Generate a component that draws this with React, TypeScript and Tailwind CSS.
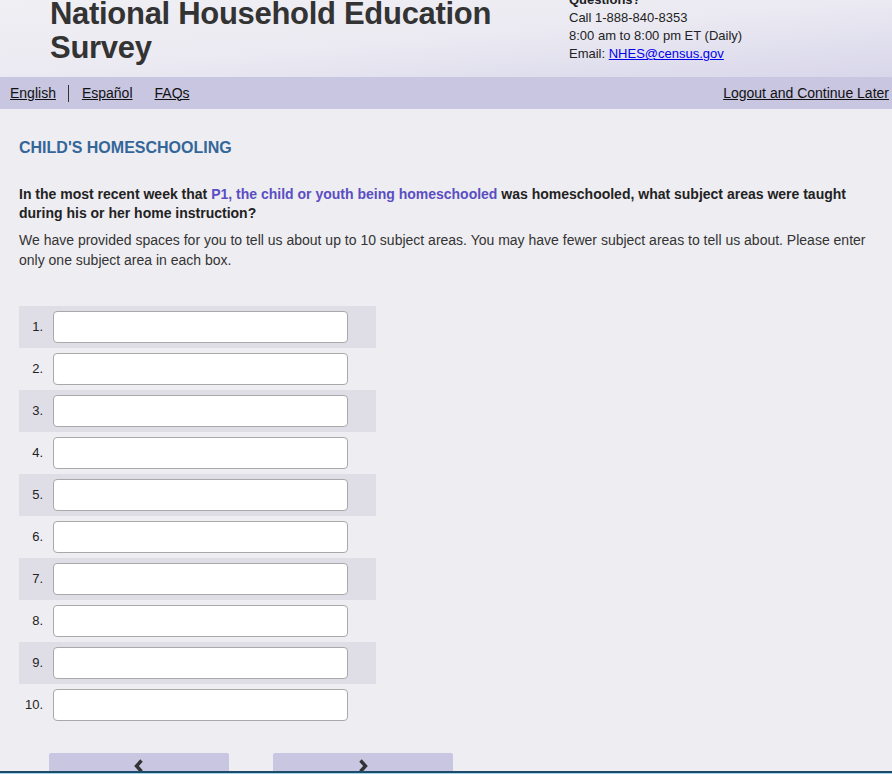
const rows = Array.from({ length: 10 }, (_, i) => i + 1);

function Chevron({ dir }: { dir: 'left' | 'right' }) {
  return (
    <svg width="12" height="16" viewBox="0 0 12 16" className="text-[#333]">
      <path
        d={dir === 'left' ? 'M8.5 2.5 L3.5 8 L8.5 13.5' : 'M3.5 2.5 L8.5 8 L3.5 13.5'}
        fill="none"
        stroke="currentColor"
        strokeWidth="3.4"
        strokeLinejoin="miter"
      />
    </svg>
  );
}

export default function App() {
  return (
    <div className="h-[774px] w-[892px] overflow-hidden flex flex-col bg-[#eeedf2] text-[#333] font-['Liberation_Sans',Arial,sans-serif]">
      {/* Header */}
      <header className="h-[77px] shrink-0 overflow-hidden flex bg-gradient-to-br from-[#f0eff4] via-[#ebeaf2] to-[#d8d6ea]">
        <h1 className="ml-[50px] mt-[-3px] w-[480px] text-[31px] leading-[34px] font-bold text-[#333] tracking-[-0.3px]">
          National Household Education Survey
        </h1>
        <div className="ml-[39px] mt-[-9px] text-[13px] leading-[18px] text-[#222]">
          <div className="font-bold">Questions?</div>
          <div>Call 1-888-840-8353</div>
          <div>8:00 am to 8:00 pm ET (Daily)</div>
          <div>
            Email: <a href="#" className="text-[#0000ee] underline">NHES@census.gov</a>
          </div>
        </div>
      </header>

      {/* Nav */}
      <nav className="h-[32px] shrink-0 bg-[#c8c6e1] flex items-center px-[10px] text-[14px] text-[#111]">
        <a href="#" className="underline">English</a>
        <span className="ml-[12px] mr-[13px] h-[17px] w-px bg-[#333]" />
        <a href="#" className="underline">Español</a>
        <a href="#" className="underline ml-[22px]">FAQs</a>
        <a href="#" className="underline ml-auto mr-[-7px]">Logout and Continue Later</a>
      </nav>

      {/* Main */}
      <main className="flex-1 overflow-hidden px-[19px] pt-[29px]">
        <h2 className="text-[16px] leading-[20px] font-bold text-[#336699]">CHILD'S HOMESCHOOLING</h2>
        <p className="mt-[27px] text-[14px] leading-[19px] font-bold text-[#222]">
          In the most recent week that{' '}
          <span className="text-[#5a4ec2]">P1, the child or youth being homeschooled</span> was homeschooled, what
          subject areas were taught during his or her home instruction?
        </p>
        <p className="mt-[7px] text-[14px] leading-[20px] text-[#333]">
          We have provided spaces for you to tell us about up to 10 subject areas. You may have fewer subject areas to
          tell us about. Please enter only one subject area in each box.
        </p>

        <div className="mt-[36px] w-[357px]">
          {rows.map((n) => (
            <div key={n} className={`h-[42px] flex items-center ${n % 2 === 1 ? 'bg-[#dfdee7]' : ''}`}>
              <label className="w-[34px] pr-[10px] text-right text-[13px] text-[#222]">{n}.</label>
              <input
                type="text"
                className="h-[32px] w-[295px] rounded-[4px] border border-[#a9a9a9] bg-white"
              />
            </div>
          ))}
        </div>

        <div className="mt-[27px] ml-[30px] flex gap-[44px]">
          <button className="h-[40px] w-[180px] rounded-t-[2px] bg-[#c8c6e1] flex justify-center pt-[5px]">
            <Chevron dir="left" />
          </button>
          <button className="h-[40px] w-[180px] rounded-t-[2px] bg-[#c8c6e1] flex justify-center pt-[5px]">
            <Chevron dir="right" />
          </button>
        </div>
      </main>

      <footer className="h-[3px] shrink-0 border-t-2 border-[#1d4c6a] bg-[#a9d3ea]" />
    </div>
  );
}
